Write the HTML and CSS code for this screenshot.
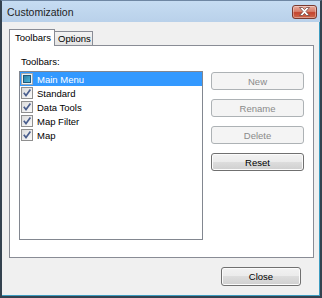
FILE: index.html
```html
<!DOCTYPE html>
<html lang="en">
<head>
  <meta charset="UTF-8" />
  <meta name="viewport" content="width=device-width, initial-scale=1.0" />
  <title>Customization</title>
  <link rel="stylesheet" href="styles.css">
</head>
<body>
  <div class="window">
    <!-- title bar -->
    <div class="titlebar">
      <span class="title">Customization</span>
      <span class="close-x">
        <svg width="13" height="9" viewBox="0 0 13 9">
          <path d="M1.5 0.5 L4.5 0.5 L6.5 2.6 L8.5 0.5 L11.5 0.5 L8 4.5 L11.5 8.5 L8.5 8.5 L6.5 6.4 L4.5 8.5 L1.5 8.5 L5 4.5 Z" fill="#ffffff" stroke="#6e4a45" stroke-width="0.8" stroke-linejoin="round" />
        </svg>
      </span>
    </div>

    <div class="client">
      <!-- tabs -->
      <div class="tabs">
        <div class="tab active">Toolbars</div>
        <div class="tab">Options</div>
      </div>

      <div class="panel">
        <div class="label">Toolbars:</div>
        <div class="panel-body">
          <ul class="list">
            <li class="selected"><span class="check partial"></span>Main Menu</li>
            <li><span class="check"><svg width="10" height="10" viewBox="0 0 10 10"><path d="M1.8 4.8 L4 7.6 L8.4 1.6" fill="none" stroke="#4b5f8e" stroke-width="1.7" /></svg></span>Standard</li>
            <li><span class="check"><svg width="10" height="10" viewBox="0 0 10 10"><path d="M1.8 4.8 L4 7.6 L8.4 1.6" fill="none" stroke="#4b5f8e" stroke-width="1.7" /></svg></span>Data Tools</li>
            <li><span class="check"><svg width="10" height="10" viewBox="0 0 10 10"><path d="M1.8 4.8 L4 7.6 L8.4 1.6" fill="none" stroke="#4b5f8e" stroke-width="1.7" /></svg></span>Map Filter</li>
            <li><span class="check"><svg width="10" height="10" viewBox="0 0 10 10"><path d="M1.8 4.8 L4 7.6 L8.4 1.6" fill="none" stroke="#4b5f8e" stroke-width="1.7" /></svg></span>Map</li>
          </ul>

          <div class="actions">
            <button class="btn" disabled>New</button>
            <button class="btn" disabled>Rename</button>
            <button class="btn" disabled>Delete</button>
            <button class="btn">Reset</button>
          </div>
        </div>
      </div>

      <div class="footer">
        <button class="btn close">Close</button>
      </div>
    </div>
  </div>
</body>
</html>
```

FILE: styles.css
```css
body {
  margin: 0;
  padding: 0;
  font-family: "Liberation Sans", Arial, sans-serif;
  font-size: 9.5px;
  color: #000;
}
.window {
  width: 322px;
  height: 298px;
  box-sizing: border-box;
  display: flex;
  flex-direction: column;
  border-top: 1px solid #6f87a3;
  border-left: 2px solid #34424f;
  border-right: 2px solid #34424f;
  border-bottom: 2px solid #34424f;
  background-color: #bcd4ed;
}
.titlebar {
  height: 21px;
  display: flex;
  align-items: center;
  justify-content: space-between;
  padding: 0 3px 0 5px;
  background: linear-gradient(#c6dcf2, #b9d1ea);
}
.title {
  font-size: 10.5px;
  color: #1e1e1e;
}
.close-x {
  width: 25px;
  height: 14px;
  box-sizing: border-box;
  display: flex;
  align-items: center;
  justify-content: center;
  border: 1px solid #7a3a30;
  border-radius: 3px;
  background: linear-gradient(#e8a99b 0%, #d8806d 45%, #c4442e 55%, #cf6a4f 100%);
  box-shadow: inset 0 0 0 1px rgba(255, 255, 255, 0.35);
}
.client {
  flex: 1;
  display: flex;
  flex-direction: column;
  padding: 7px 5px 0 7px;
  background-color: #f0f0f0;
  border-right: 1px solid #3d9cc0;
  border-bottom: 1px solid #3d9cc0;
}
.tabs {
  height: 16px;
  display: flex;
  align-items: flex-end;
}
.tab {
  box-sizing: border-box;
  height: 14px;
  line-height: 13px;
  padding: 0 3px;
  border: 1px solid #898c95;
  border-bottom: none;
  background: linear-gradient(#f3f3f3, #e4e4e4);
}
.tab + .tab {
  margin-left: -1px;
  width: 39px;
}
.tab.active {
  position: relative;
  z-index: 1;
  width: 46px;
  height: 17px;
  line-height: 16px;
  margin-bottom: -1px;
  padding-left: 5px;
  background: #ffffff;
}
.panel {
  flex: 1;
  display: flex;
  flex-direction: column;
  padding: 10px 9px 17px 9px;
  border: 1px solid #898c95;
  background-color: #ffffff;
}
.label {
  line-height: 12px;
  margin: 0 0 3px 2px;
}
.panel-body {
  flex: 1;
  display: flex;
  gap: 8px;
}
.list {
  width: 184px;
  box-sizing: border-box;
  margin: 0;
  padding: 0;
  list-style: none;
  border: 1px solid #828790;
}
.list li {
  height: 14px;
  display: flex;
  align-items: center;
  gap: 4px;
  padding-left: 1px;
}
.list li.selected {
  background-color: #3399ff;
  color: #ffffff;
}
.check {
  width: 12px;
  height: 12px;
  box-sizing: border-box;
  display: flex;
  align-items: center;
  justify-content: center;
  border: 1px solid #8f8f8f;
  background: linear-gradient(135deg, #dcdcdc, #fbfbfb);
}
.check.partial {
  border-color: #9ea6ad;
  background: #eef2f5;
}
.check.partial::after {
  content: "";
  width: 8px;
  height: 8px;
  box-sizing: border-box;
  border: 1px solid #1d5a7c;
  background: linear-gradient(135deg, #2e7fa8, #4db6d8);
}
.actions {
  width: 93px;
  display: flex;
  flex-direction: column;
  gap: 9px;
  padding-top: 1px;
}
.btn {
  height: 18px;
  padding: 0;
  font-family: "Liberation Sans", Arial, sans-serif;
  font-size: 9.5px;
  color: #000;
  border: 1px solid #707070;
  border-radius: 3px;
  background: linear-gradient(#f2f2f2 0%, #ebebeb 50%, #dddddd 50%, #cfcfcf 100%);
  box-shadow: inset 0 0 0 1px #fbfbfb;
}
.btn:disabled {
  color: #8a8a8a;
  border-color: #adb2b5;
  background: #f4f4f4;
  box-shadow: none;
}
.footer {
  height: 37px;
  display: flex;
  align-items: center;
  justify-content: flex-end;
}
.btn.close {
  width: 80px;
  height: 19px;
  margin-right: 13px;
}
```
